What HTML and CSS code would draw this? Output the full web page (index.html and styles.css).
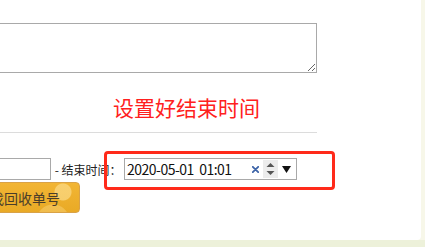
FILE: index.html
```html
<!DOCTYPE html>
<html lang="zh-CN">
<head>
<meta charset="utf-8">
<title>设置结束时间</title>
<link rel="stylesheet" href="styles.css">
</head>
<body>
<div class="panel">
  <div class="content">
    <textarea class="memo"></textarea>
    <p class="note">设置好结束时间</p>
    <hr class="divider">
    <div class="filters">
      <input class="text-input" type="text">
      <span class="label"> - 结束时间：</span>
      <div class="datebox">
        <span class="date-value">2020-05-01  01:01</span>
        <svg class="clear" width="7" height="7" viewBox="0 0 7 7"><path d="M0.8 0.8L6.2 6.2M6.2 0.8L0.8 6.2" stroke="#3d64a8" stroke-width="1.8" stroke-linecap="round"/></svg>
        <span class="spin">
          <svg width="9" height="14" viewBox="0 0 9 14"><path d="M0.5 5L4.5 1L8.5 5Z" fill="#555"/><path d="M0.5 9L4.5 13L8.5 9Z" fill="#555"/></svg>
        </span>
        <svg class="drop" width="9" height="7" viewBox="0 0 9 7"><path d="M0 0H9L4.5 7Z" fill="#111"/></svg>
        <div class="highlight"></div>
      </div>
    </div>
    <button class="search-btn" type="button">查找回收单号</button>
  </div>
</div>
<div class="footer"></div>
</body>
</html>
```

FILE: styles.css
```css
html, body {
  margin: 0;
  padding: 0;
}

body {
  background: #f7f7e9;
  font-family: "Noto Sans CJK SC", "Noto Sans", sans-serif;
  overflow: hidden;
}

.panel {
  width: 421px;
  height: 240px;
  box-sizing: border-box;
  background: #ffffff;
  border-bottom-right-radius: 4px;
  padding-top: 23px;
  overflow: hidden;
}

.content {
  margin-left: -120px;
  width: 437px;
}

.memo {
  display: block;
  width: 100%;
  height: 50px;
  box-sizing: border-box;
  margin: 0;
  border: 1px solid #a9a9a9;
  border-radius: 0;
  outline: none;
}

.note {
  margin: 19px 0 0 233px;
  font-size: 21px;
  line-height: 30px;
  color: #ff2020;
}

.divider {
  margin: 10px 0 0 0;
  border: 0;
  border-top: 1px solid #dcdcdc;
  height: 0;
}

.filters {
  display: flex;
  align-items: center;
  margin-top: 25px;
  height: 22px;
}

.text-input {
  margin: 0 0 0 20px;
  width: 151px;
  height: 22px;
  box-sizing: border-box;
  border: 1px solid #a9a9a9;
  padding: 0;
  outline: none;
}

.label {
  font-size: 12px;
  color: #222;
  white-space: pre;
  margin-left: 1px;
  width: 72px;
}

.datebox {
  position: relative;
  display: flex;
  align-items: center;
  width: 173px;
  height: 22px;
  box-sizing: border-box;
  border: 1px solid #a9a9a9;
  padding-left: 2px;
}

.date-value {
  flex: 1;
  font-size: 14px;
  letter-spacing: -0.5px;
  white-space: pre;
  color: #111;
  line-height: 20px;
}

.clear {
  margin-right: 4px;
}

.spin {
  display: flex;
  align-items: center;
  justify-content: center;
  width: 15px;
  height: 18px;
  background: #ececec;
  margin-right: 4px;
}

.drop {
  margin-right: 5px;
}

.highlight {
  position: absolute;
  left: -21px;
  top: -8px;
  width: 231px;
  height: 39px;
  box-sizing: border-box;
  border: 3px solid #ff2a1a;
  border-radius: 4px;
  pointer-events: none;
}

.search-btn {
  display: block;
  margin: 2px 0 0 60px;
  width: 140px;
  height: 31px;
  box-sizing: border-box;
  padding: 0 0 0 35px;
  text-align: left;
  border: 1px solid #d9a247;
  border-radius: 4px;
  font-family: "Noto Sans CJK SC", sans-serif;
  font-size: 14px;
  color: #4a3d2a;
  background:
    radial-gradient(circle at 122px 9px, rgba(255, 230, 160, 0.55) 0 8px, transparent 9px),
    radial-gradient(circle at 112px 38px, rgba(255, 225, 150, 0.35) 0 16px, transparent 17px),
    linear-gradient(#f2b534, #e9aa26);
}

.footer {
  height: 7px;
  background: #edf1da;
}
```
